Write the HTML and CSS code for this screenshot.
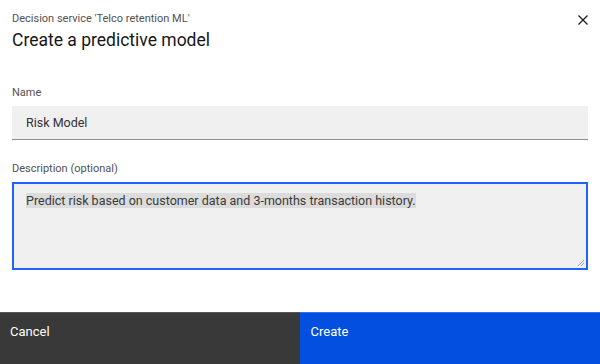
FILE: index.html
```html
<!DOCTYPE html>
<html lang="en">
<head>
    <meta charset="UTF-8">
    <title>Create a predictive model</title>
    <link rel="stylesheet" href="styles.css">
</head>
<body>
    <div class="modal">
        <div class="modal-header">
            <div class="titles">
                <p class="label">Decision service 'Telco retention ML'</p>
                <h2 class="heading">Create a predictive model</h2>
            </div>
            <button class="close" aria-label="Close">
                <svg width="16" height="16" viewBox="0 0 16 16">
                    <path d="M3.5 3.5 L12.5 12.5 M12.5 3.5 L3.5 12.5" stroke="#161616" stroke-width="1.2" fill="none"/>
                </svg>
            </button>
        </div>

        <div class="modal-body">
            <div class="field">
                <label class="field-label" for="name">Name</label>
                <div class="text-input" id="name">Risk Model</div>
            </div>
            <div class="field field-desc">
                <label class="field-label" for="desc">Description (optional)</label>
                <div class="text-area" id="desc">
                    <span class="selected">Predict risk based on customer data and 3-months transaction history.</span>
                    <svg class="grip" width="8" height="8" viewBox="0 0 8 8">
                        <path d="M7 1 L1 7 M7 4 L4 7" stroke="#999" stroke-width="1" fill="none"/>
                    </svg>
                </div>
            </div>
        </div>

        <div class="modal-footer">
            <button class="btn btn-secondary">Cancel</button>
            <button class="btn btn-primary">Create</button>
        </div>
    </div>
</body>
</html>
```

FILE: styles.css
```css
body {
    margin: 0;
    font-family: Roboto, Arial, sans-serif;
    background-color: #fff;
    color: #161616;
}
.modal {
    width: 600px;
    height: 364px;
    display: flex;
    flex-direction: column;
}
.modal-header {
    display: flex;
    justify-content: space-between;
    padding: 11px 12px 0 12px;
}
.label {
    margin: 0;
    font-size: 11px;
    line-height: 16px;
    color: #525252;
}
.heading {
    margin: 2px 0 0 0;
    font-size: 17.5px;
    font-weight: 400;
    line-height: 22px;
}
.close {
    background: none;
    border: none;
    padding: 0;
    margin: 1px -3px 0 0;
    width: 16px;
    height: 16px;
    cursor: pointer;
}
.modal-body {
    flex: 1;
    padding: 0 12px;
}
.field {
    margin-top: 34px;
}
.field-desc {
    margin-top: 21px;
}
.field-label {
    display: block;
    font-size: 11px;
    line-height: 16px;
    color: #525252;
    margin-bottom: 5px;
}
.text-input {
    background-color: #f0f0f0;
    border-bottom: 1px solid #8d8d8d;
    height: 33px;
    line-height: 33px;
    padding: 0 14px;
    font-size: 12.5px;
    color: #333;
}
.text-area {
    position: relative;
    background-color: #f0f0f0;
    border: 2px solid #1f62ff;
    height: 70px;
    padding: 8px 12px 6px;
    font-size: 12.5px;
    line-height: 18px;
    color: #3a3a3a;
    box-sizing: content-box;
    width: calc(100% - 28px);
}
.selected {
    background-color: #dcdcdc;
}
.grip {
    position: absolute;
    right: 1px;
    bottom: 1px;
}
.modal-footer {
    display: flex;
    height: 52px;
}
.btn {
    flex: 1;
    border: none;
    border-top: 1px solid transparent;
    text-align: left;
    font-family: inherit;
    font-size: 13px;
    padding: 0 11px 14px;
    color: #fff;
    cursor: pointer;
}
.btn-secondary {
    background-color: #393939;
    border-top-color: #555;
    padding-left: 10px;
}
.btn-primary {
    background-color: #0350e0;
    border-top-color: #2f6cff;
}
```
